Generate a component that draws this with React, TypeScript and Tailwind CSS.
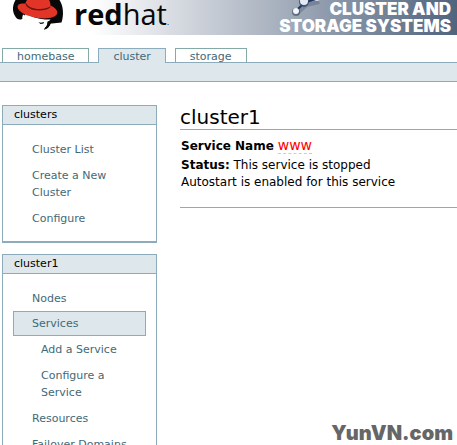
import clsx from "clsx";

interface NavItem {
  label: string;
  active?: boolean;
  nested?: boolean;
}

interface PortletProps {
  title: string;
  items: NavItem[];
}

const TABS = [
  { label: "homebase", active: false },
  { label: "cluster", active: true },
  { label: "storage", active: false },
];

const CLUSTERS_NAV: NavItem[] = [
  { label: "Cluster List" },
  { label: "Create a New Cluster" },
  { label: "Configure" },
];

const CLUSTER_NAV: NavItem[] = [
  { label: "Nodes" },
  { label: "Services", active: true },
  { label: "Add a Service", nested: true },
  { label: "Configure a Service", nested: true },
  { label: "Resources" },
  { label: "Failover Domains" },
];

function HatLogo() {
  return (
    <svg width="52" height="35" viewBox="0 0 52 35" aria-hidden="true">
      {/* head */}
      <path
        d="M3.5 0 C0.5 5 0 11 3 16 C4.5 19 7 20 9.5 19.3 L12 18.5 L14 20.5 L17 19 L28 22 L34 21 L35 24 L32 29.5 C35.5 28.5 37.5 26.5 38.5 23.5 C42 23.8 46 22.8 49.5 22.6 C52 15 51.5 6 47.5 0 Z"
        fill="#080808"
      />
      {/* face */}
      <path
        d="M10 18.5 L11 14.5 L13 15.5 L13.5 13 C19 17 26 19 33 19.5 L38.5 19.5 L36 22.5 L34 27 L24 25 L14 21 L12.5 19.5 Z"
        fill="#fff"
      />
      <path d="M26.5 22.3 L29 22.8 L32 22 L31.5 23.6 L28.5 24 Z" fill="#080808" />
      <path d="M35.5 21.5 L40 20 L38.5 24 C37 27.5 35 29 32 29.8 L35 25.5 Z" fill="#080808" />
      {/* hat */}
      <path
        d="M15 0 L13 3.5 C9 3 5.5 4 5.5 7 C6 12 15 16.5 26 18 C36 19.2 44 17.5 45.2 13.5 C46 10.5 42.5 7 38.5 5.5 C38.5 3 37.8 1 37 0 Z"
        fill="#e23427"
      />
      <path d="M13.2 3 C14 8 20 10.4 27 10.4 C32 10.4 36 9.4 38.3 7.4 L38.5 6.3 C35 8.6 30 9.5 25 8.9 C19 8.1 15 6 13.9 2.5 Z" fill="#6b1510" />
    </svg>
  );
}

function NodesGraphic() {
  return (
    <svg className="absolute left-2 top-0" width="44" height="20" viewBox="0 0 44 20" aria-hidden="true">
      <path d="M9 13 L19 4 L32 1" fill="none" stroke="#344760" strokeWidth="6" opacity="0.3" />
      <path d="M9 11 L17 3 L31 -2" fill="none" stroke="#203669" strokeWidth="2" />
      <circle cx="9" cy="12" r="4" fill="#25384f" opacity="0.5" />
      <circle cx="17" cy="2" r="5" fill="#33496a" opacity="0.8" />
      <circle cx="17" cy="1" r="4" fill="#e2e9f5" />
      <circle cx="9" cy="11" r="3" fill="#f2f5fa" />
      <circle cx="30" cy="-2" r="3" fill="#d5deec" />
    </svg>
  );
}

function Banner() {
  return (
    <header className="flex h-[35px] justify-between bg-linear-to-r from-white from-20% via-[#a9b2bf] via-60% to-[#50647e]">
      <div className="flex pl-3">
        <HatLogo />
        <span className="pl-2.5 font-['Open_Sans',sans-serif] text-[29px] leading-[27px] text-[#080808]">
          <b>red</b>
          <span className="font-normal">hat</span>
          <span className="text-[8px]">.</span>
        </span>
      </div>
      <div className="relative pt-px pr-1.5 text-right font-['Inter',sans-serif] text-[17px] leading-[17px] font-black whitespace-nowrap text-white">
        <NodesGraphic />
        <p>CLUSTER AND</p>
        <p>STORAGE SYSTEMS</p>
      </div>
    </header>
  );
}

function Tabs() {
  return (
    <nav className="mt-[13px]">
      <ul className="flex gap-[9px] pl-0.5">
        {TABS.map((tab) => (
          <li key={tab.label}>
            <a
              href="#"
              className={clsx(
                "block h-[14px] border border-b-0 px-3.5 leading-[15px] text-[#436976]",
                tab.active ? "relative -mb-px h-[15px] border-[#8cacbb] bg-[#dee7ec]" : "border-[#84aaa6]",
              )}
            >
              {tab.label}
            </a>
          </li>
        ))}
      </ul>
      <div className="h-5 border-y border-[#8cacbb] bg-[#dee7ec]" />
    </nav>
  );
}

function Portlet({ title, items }: PortletProps) {
  return (
    <section className="border border-b-2 border-[#8cacbb]">
      <h2 className="border-b border-[#8cacbb] bg-[#dee7ec] px-[11px] leading-[18px] text-black">{title}</h2>
      <ul className="px-2.5 pt-[11px] pb-2.5">
        {items.map((item) => (
          <li key={item.label}>
            <a
              href="#"
              className={clsx(
                "block border text-[#436976] leading-[17px]",
                item.active ? "border-[#8cacbb] bg-[#dee7ec] py-[3px]" : "border-transparent pt-1 pb-[3px]",
                item.nested ? "pl-[27px] pr-4" : "pl-[18px]",
              )}
            >
              {item.label}
            </a>
          </li>
        ))}
      </ul>
    </section>
  );
}

export default function App() {
  return (
    <div className="relative h-screen overflow-hidden bg-white font-['DejaVu_Sans',sans-serif] text-[11px]">
      <Banner />
      <Tabs />
      <div className="flex gap-[23px] pt-[23px] pl-0.5">
        <aside className="flex w-[155px] shrink-0 flex-col gap-[11px]">
          <Portlet title="clusters" items={CLUSTERS_NAV} />
          <Portlet title="cluster1" items={CLUSTER_NAV} />
        </aside>
        <main className="min-w-0 flex-1 text-xs text-black">
          <h1 className="border-b border-[#8cacbb] text-xl leading-6">cluster1</h1>
          <div className="border-b border-[#8cacbb] pt-[7px] pb-4 pl-px leading-[17px]">
            <p className="pb-0.5">
              <b>Service Name</b>{" "}
              <a href="#" className="border-b border-dashed border-[#cccccc] text-sm leading-[17px] text-[#ff0000]">
                www
              </a>
            </p>
            <p>
              <b>Status:</b> This service is stopped
            </p>
            <p>Autostart is enabled for this service</p>
          </div>
        </main>
      </div>
      <span className="absolute right-1 bottom-0 font-['Inter',sans-serif] text-xl leading-6 font-black text-[#666666]">
        YunVN.com
      </span>
    </div>
  );
}
